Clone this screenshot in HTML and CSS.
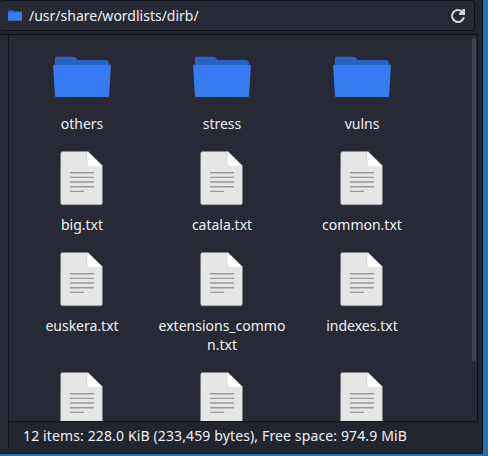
FILE: index.html
```html
<!DOCTYPE html>
<html lang="en">
<head>
<meta charset="utf-8">
<title>dirb</title>
<link rel="stylesheet" href="styles.css">
</head>
<body>
<svg class="defs" width="0" height="0" aria-hidden="true">
  <symbol id="folder" viewBox="0 0 64 64">
    <path d="M3 22V13Q3 11.7 4.5 11.7H21.5Q22.6 11.7 23.4 12.6L25.8 15H54Q56.6 15 56.8 17.5V22Z" fill="#2a62bd"/>
    <path d="M2 19.8H58Q59 19.8 58.9 21L57.1 50.5Q57 52 55.6 52H4.4Q3 52 2.9 50.5L1.1 21Q1 19.8 2 19.8Z" fill="#367bf0"/>
  </symbol>
  <symbol id="file" viewBox="0 0 64 64">
    <path d="M10.6 5.5H36L50.4 19.8V57Q50.4 58.8 48.6 58.8H10.4Q8.6 58.8 8.6 57V7.5Q8.6 5.5 10.6 5.5Z" fill="#e6e6e6" stroke="#8b8b90" stroke-width=".6"/>
    <path d="M34.9 6V17.5Q34.9 20 37.2 20H38" fill="none" stroke="#d8d8d8" stroke-width="1.2"/>
    <path d="M35.5 5.5L50.5 20H37.5Q35.5 20 35.5 18Z" fill="#fff"/>
    <path d="M18 26.7H42M18 31.4H42M18 36H42M18 40.7H42M18 45.4H32" stroke="#999" stroke-width="1.4"/>
  </symbol>
</svg>
<main class="window">
  <header class="toolbar">
    <div class="path">
      <svg class="path-folder" viewBox="0 0 14 12"><path d="M0 4V1Q0 .2 .8 .2H5L6.2 1.2H13Q14 1.2 14 2V4Z" fill="#2a62bd"/><path d="M0 2.5H14V10Q14 10.8 13.2 10.8H.8Q0 10.8 0 10Z" fill="#367bf0"/></svg>
      <span class="path-text">/usr/share/wordlists/dirb/</span>
      <svg class="reload" viewBox="0 0 16 16"><path d="M13.9 9.3A6 6 0 1 1 11.8 3.3" fill="none" stroke="#d3d5d5" stroke-width="2.1"/><path d="M15 1V7H9V5.2L13.2 1Z" fill="#d3d5d5"/></svg>
    </div>
  </header>
  <div class="body">
    <aside class="side"></aside>
    <section class="content">
      <div class="pane">
        <div class="grid">
          <div class="item"><svg class="icon"><use href="#folder"/></svg><span class="label">others</span></div>
          <div class="item"><svg class="icon"><use href="#folder"/></svg><span class="label">stress</span></div>
          <div class="item"><svg class="icon"><use href="#folder"/></svg><span class="label">vulns</span></div>
          <div class="item"><svg class="icon"><use href="#file"/></svg><span class="label">big.txt</span></div>
          <div class="item"><svg class="icon"><use href="#file"/></svg><span class="label">catala.txt</span></div>
          <div class="item"><svg class="icon"><use href="#file"/></svg><span class="label">common.txt</span></div>
          <div class="item"><svg class="icon"><use href="#file"/></svg><span class="label">euskera.txt</span></div>
          <div class="item"><svg class="icon"><use href="#file"/></svg><span class="label">extensions_commo<br>n.txt</span></div>
          <div class="item"><svg class="icon"><use href="#file"/></svg><span class="label">indexes.txt</span></div>
          <div class="item"><svg class="icon"><use href="#file"/></svg></div>
          <div class="item"><svg class="icon"><use href="#file"/></svg></div>
          <div class="item"><svg class="icon"><use href="#file"/></svg></div>
        </div>
        <div class="scrollbar"></div>
      </div>
      <footer class="status">12 items: 228.0 KiB (233,459 bytes), Free space: 974.9 MiB</footer>
    </section>
  </div>
</main>
</body>
</html>
```
FILE: styles.css
```css
* { box-sizing: border-box; }
body {
  margin: 0;
  height: 456px;
  overflow: hidden;
  background: #2473ae;
  color: #f0f1f3;
  font: 14px/19px "Noto Sans", sans-serif;
}
.defs { display: block; height: 0; }
.window {
  display: flex;
  flex-direction: column;
  width: 483px;
  height: 454px;
  background: #23252e;
  border: solid #0f1116;
  border-width: 0 1px 1px 0;
  border-bottom-right-radius: 2px;
}
.toolbar { height: 34px; padding-right: 7px; }
.path {
  display: flex;
  align-items: center;
  height: 31px;
  padding: 0 8px;
  background: #272a34;
  border: 1px solid #0f1116;
  border-left: 0;
  border-radius: 4px;
}
.path-folder { width: 14px; height: 12px; }
.path-text { flex: 1; margin-left: 7px; }
.reload { width: 16px; height: 16px; }
.body { display: flex; flex: 1; }
.side {
  width: 9px;
  height: 415px;
  background: #272a34;
  border-top: 1px solid #0f1116;
  border-right: 1px solid #0f1116;
}
.content { width: 469px; }
.pane {
  display: flex;
  height: 388px;
  overflow: hidden;
  background: #272a34;
  border: solid #0f1116;
  border-width: 1px 1px 1px 0;
}
.grid {
  display: grid;
  grid-template-columns: repeat(3, 140px);
  grid-auto-rows: max-content;
  width: 463px;
  padding: 10px 0 0 3px;
}
.item {
  display: flex;
  flex-direction: column;
  align-items: center;
  padding-bottom: 13px;
}
.icon { width: 64px; height: 64px; margin-left: 4px; }
.label { margin-top: 5px; text-align: center; }
.scrollbar {
  width: 4px;
  height: 323px;
  margin-top: 3px;
  background: #454750;
  border-radius: 2px;
}
.status { padding: 4px 14px; white-space: nowrap; letter-spacing: .13px; }
```
